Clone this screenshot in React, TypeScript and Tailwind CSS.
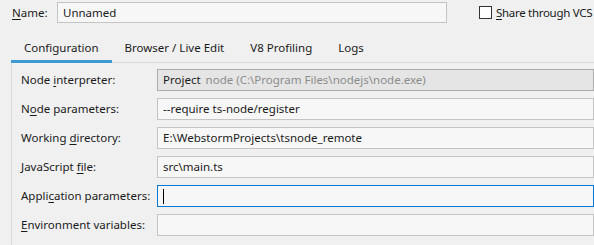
import React from 'react';

const rows: { label: React.ReactNode; value: React.ReactNode; kind?: 'combo' | 'focus' }[] = [
  {
    label: <>Node <u className="underline-offset-2">i</u>nterpreter:</>,
    value: (
      <>
        <span className="text-[#1a1a1a]">Project</span>
        <span className="ml-[5px] text-[#8c8c8c]">node (C:\Program Files\nodejs\node.exe)</span>
      </>
    ),
    kind: 'combo',
  },
  { label: <>N<u className="underline-offset-2">o</u>de parameters:</>, value: '--require ts-node/register' },
  { label: <>Working <u className="underline-offset-2">d</u>irectory:</>, value: 'E:\\WebstormProjects\\tsnode_remote' },
  { label: <>JavaScript <u className="underline-offset-2">f</u>ile:</>, value: 'src\\main.ts' },
  {
    label: <>Appli<u className="underline-offset-2">c</u>ation parameters:</>,
    value: <span className="inline-block w-px h-[15px] bg-black align-middle" />,
    kind: 'focus',
  },
  { label: <><u className="underline-offset-2">E</u>nvironment variables:</>, value: '' },
];

const tabs = ['Configuration', 'Browser / Live Edit', 'V8 Profiling', 'Logs'];

export default function App() {
  return (
    <div
      className="w-[594px] h-[245px] overflow-hidden bg-[#f0f0f0] text-[11.5px] text-[#1a1a1a]"
      style={{ fontFamily: '"Noto Sans", "Open Sans", sans-serif' }}
    >
      <div className="flex items-center h-[21px] mt-[2px]">
        <label className="w-[57px] pl-3 shrink-0 whitespace-nowrap">
          <u className="underline-offset-2">N</u>ame:
        </label>
        <div className="w-[390px] h-[21px] shrink-0 flex items-center pl-[5px] bg-[#f7f7f7] border border-[#c4c4c4]">
          Unnamed
        </div>
        <div className="ml-[32px] flex items-center gap-[4px] whitespace-nowrap">
          <span className="w-[13px] h-[13px] shrink-0 bg-white border border-[#333333]" />
          <span className="tracking-[-0.3px]">
            <u className="underline-offset-2">S</u>hare through VCS
          </span>
        </div>
      </div>

      <div className="ml-[11px] mt-[10px] flex h-[30px] border-b border-[#d9d9d9]">
        {tabs.map((t, i) => (
          <div key={t} className="relative px-[13px] flex items-center whitespace-nowrap">
            {t}
            {i === 0 && <span className="absolute left-0 right-0 -bottom-px h-[3px] bg-[#3d9bd1]" />}
          </div>
        ))}
      </div>

      <div className="ml-[11px] border-l border-[#d9d9d9] pt-[6px] pl-[9px] flex flex-col gap-[7px] h-[200px]">
        {rows.map((r, i) => (
          <div key={i} className="flex items-center h-[22px]">
            <div className="w-[136px] shrink-0 whitespace-nowrap">{r.label}</div>
            <div
              className={`flex-1 h-[22px] flex items-center pl-[5px] whitespace-nowrap border ${
                r.kind === 'combo'
                  ? 'bg-[#e5e5e5] border-[#adadad]'
                  : r.kind === 'focus'
                  ? 'bg-[#f7f7f7] border-[#0078d7]'
                  : 'bg-[#f7f7f7] border-[#c4c4c4]'
              }`}
            >
              {r.value}
            </div>
          </div>
        ))}
      </div>
    </div>
  );
}
